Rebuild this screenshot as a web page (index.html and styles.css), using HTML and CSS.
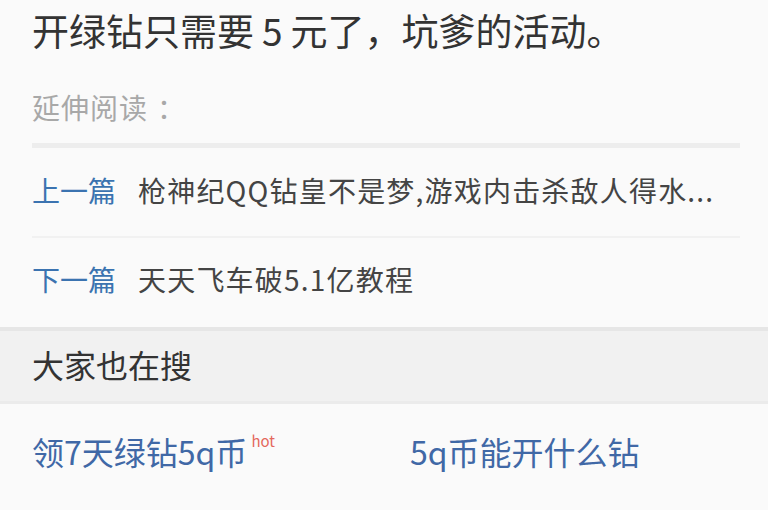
FILE: index.html
```html
<!DOCTYPE html>
<html lang="zh-CN">
<head>
<meta charset="utf-8">
<title>开绿钻只需要5元了，坑爹的活动。</title>
<link rel="stylesheet" href="styles.css">
</head>
<body>
<div class="article">
  <h1 class="title">开绿钻只需要<span class="num">5</span>元了，坑爹的活动。</h1>
  <div class="ext-label">延伸阅读<span class="colon">：</span></div>
  <div class="divider"></div>
  <div class="nav-list">
    <div class="nav-row"><span class="nav-label">上一篇</span><span class="nav-title">枪神纪QQ钻皇不是梦,游戏内击杀敌人得水...</span></div>
    <div class="nav-row"><span class="nav-label">下一篇</span><span class="nav-title">天天飞车破5.1亿教程</span></div>
  </div>
</div>
<div class="search-head">大家也在搜</div>
<div class="search-links">
  <a class="search-link">领7天绿钻5q币<sup class="hot">hot</sup></a>
  <a class="search-link">5q币能开什么钻</a>
</div>
</body>
</html>
```
FILE: styles.css
```css
html, body {
  margin: 0;
  padding: 0;
}
body {
  background: #fafafa;
  font-family: "Noto Sans CJK SC", "Noto Sans", sans-serif;
  color: #333;
  width: 768px;
  height: 510px;
  overflow: hidden;
}
.article {
  padding: 0 28px 0 32px;
}
.title {
  margin: 0;
  padding-top: 4px;
  font-size: 37px;
  line-height: 52px;
  font-weight: 400;
  color: #333;
  white-space: nowrap;
}
.num {
  padding: 0 8px;
}
.ext-label {
  margin-top: 31px;
  font-size: 28px;
  line-height: 40px;
  letter-spacing: 1px;
  color: #a8a8a8;
}
.colon {
  padding-left: 9px;
}
.divider {
  margin-top: 16px;
  height: 5px;
  background: #ededed;
}
.nav-row {
  height: 83px;
  padding-bottom: 5px;
  display: flex;
  align-items: center;
  font-size: 28px;
  white-space: nowrap;
  overflow: hidden;
}
.nav-row + .nav-row {
  border-top: 2px solid #f1f1f1;
  height: 81px;
}
.nav-label {
  color: #3b73b0;
  margin-right: 22px;
}
.nav-title {
  color: #444;
  letter-spacing: 1.2px;
}
.search-head {
  margin-top: 3px;
  border-top: 4px solid #e6e6e6;
  border-bottom: 3px solid #ebebeb;
  background: #f1f1f1;
  height: 70px;
  line-height: 66px;
  padding-left: 32px;
  font-size: 32px;
  color: #333;
}
.search-links {
  display: grid;
  grid-template-columns: 378px 1fr;
  padding: 23px 32px 0 32px;
}
.search-link {
  font-size: 32px;
  line-height: 48px;
  color: #4068a6;
  text-decoration: none;
  white-space: nowrap;
}
.hot {
  font-size: 15px;
  line-height: 1;
  color: #e4685c;
  vertical-align: top;
  position: relative;
  top: 6px;
  margin-left: 4px;
}
```
